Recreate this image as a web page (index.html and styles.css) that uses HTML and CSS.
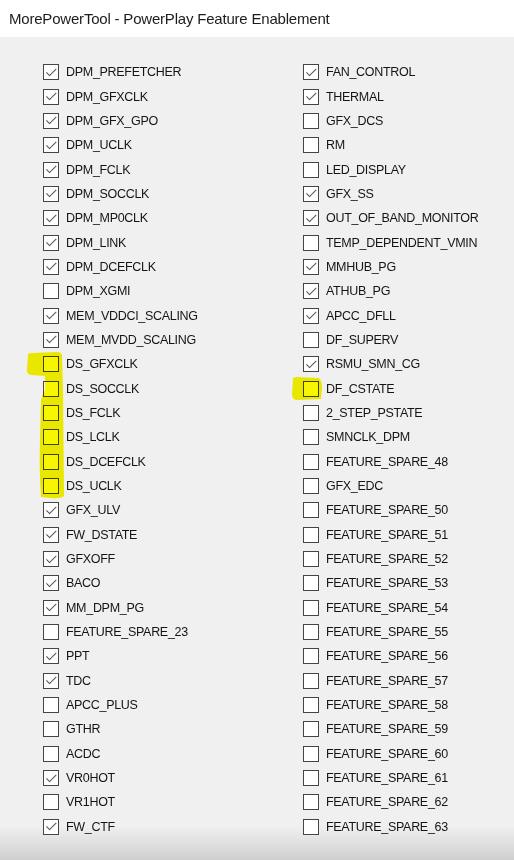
FILE: index.html
```html
<!DOCTYPE html>
<html lang="en">
<head>
    <meta charset="utf-8">
    <title>MorePowerTool - PowerPlay Feature Enablement</title>
    <link rel="stylesheet" href="styles.css">
</head>
<body>
    <div class="titlebar">MorePowerTool - PowerPlay Feature Enablement</div>
    <div class="features">
      <div class="col">
        <label class="item"><span class="box on"></span>DPM_PREFETCHER</label>
        <label class="item"><span class="box on"></span>DPM_GFXCLK</label>
        <label class="item"><span class="box on"></span>DPM_GFX_GPO</label>
        <label class="item"><span class="box on"></span>DPM_UCLK</label>
        <label class="item"><span class="box on"></span>DPM_FCLK</label>
        <label class="item"><span class="box on"></span>DPM_SOCCLK</label>
        <label class="item"><span class="box on"></span>DPM_MP0CLK</label>
        <label class="item"><span class="box on"></span>DPM_LINK</label>
        <label class="item"><span class="box on"></span>DPM_DCEFCLK</label>
        <label class="item"><span class="box"></span>DPM_XGMI</label>
        <label class="item"><span class="box on"></span>MEM_VDDCI_SCALING</label>
        <label class="item"><span class="box on"></span>MEM_MVDD_SCALING</label>
        <label class="item"><span class="box"></span>DS_GFXCLK</label>
        <label class="item"><span class="box"></span>DS_SOCCLK</label>
        <label class="item"><span class="box"></span>DS_FCLK</label>
        <label class="item"><span class="box"></span>DS_LCLK</label>
        <label class="item"><span class="box"></span>DS_DCEFCLK</label>
        <label class="item"><span class="box"></span>DS_UCLK</label>
        <label class="item"><span class="box on"></span>GFX_ULV</label>
        <label class="item"><span class="box on"></span>FW_DSTATE</label>
        <label class="item"><span class="box on"></span>GFXOFF</label>
        <label class="item"><span class="box on"></span>BACO</label>
        <label class="item"><span class="box on"></span>MM_DPM_PG</label>
        <label class="item"><span class="box"></span>FEATURE_SPARE_23</label>
        <label class="item"><span class="box on"></span>PPT</label>
        <label class="item"><span class="box on"></span>TDC</label>
        <label class="item"><span class="box"></span>APCC_PLUS</label>
        <label class="item"><span class="box"></span>GTHR</label>
        <label class="item"><span class="box"></span>ACDC</label>
        <label class="item"><span class="box on"></span>VR0HOT</label>
        <label class="item"><span class="box"></span>VR1HOT</label>
        <label class="item"><span class="box on"></span>FW_CTF</label>
      </div>
      <div class="col">
        <label class="item"><span class="box on"></span>FAN_CONTROL</label>
        <label class="item"><span class="box on"></span>THERMAL</label>
        <label class="item"><span class="box"></span>GFX_DCS</label>
        <label class="item"><span class="box"></span>RM</label>
        <label class="item"><span class="box"></span>LED_DISPLAY</label>
        <label class="item"><span class="box on"></span>GFX_SS</label>
        <label class="item"><span class="box on"></span>OUT_OF_BAND_MONITOR</label>
        <label class="item"><span class="box"></span>TEMP_DEPENDENT_VMIN</label>
        <label class="item"><span class="box on"></span>MMHUB_PG</label>
        <label class="item"><span class="box on"></span>ATHUB_PG</label>
        <label class="item"><span class="box on"></span>APCC_DFLL</label>
        <label class="item"><span class="box"></span>DF_SUPERV</label>
        <label class="item"><span class="box on"></span>RSMU_SMN_CG</label>
        <label class="item"><span class="box"></span>DF_CSTATE</label>
        <label class="item"><span class="box"></span>2_STEP_PSTATE</label>
        <label class="item"><span class="box"></span>SMNCLK_DPM</label>
        <label class="item"><span class="box"></span>FEATURE_SPARE_48</label>
        <label class="item"><span class="box"></span>GFX_EDC</label>
        <label class="item"><span class="box"></span>FEATURE_SPARE_50</label>
        <label class="item"><span class="box"></span>FEATURE_SPARE_51</label>
        <label class="item"><span class="box"></span>FEATURE_SPARE_52</label>
        <label class="item"><span class="box"></span>FEATURE_SPARE_53</label>
        <label class="item"><span class="box"></span>FEATURE_SPARE_54</label>
        <label class="item"><span class="box"></span>FEATURE_SPARE_55</label>
        <label class="item"><span class="box"></span>FEATURE_SPARE_56</label>
        <label class="item"><span class="box"></span>FEATURE_SPARE_57</label>
        <label class="item"><span class="box"></span>FEATURE_SPARE_58</label>
        <label class="item"><span class="box"></span>FEATURE_SPARE_59</label>
        <label class="item"><span class="box"></span>FEATURE_SPARE_60</label>
        <label class="item"><span class="box"></span>FEATURE_SPARE_61</label>
        <label class="item"><span class="box"></span>FEATURE_SPARE_62</label>
        <label class="item"><span class="box"></span>FEATURE_SPARE_63</label>
      </div>
    </div>
    <!-- marker scribbles drawn over the screenshot -->
    <svg class="marker" width="514" height="860" viewBox="0 0 514 860">
      <path d="M28 356 Q27 353 32 353 L58 352 Q63 353 62 358 L63 392 L64 496 Q60 499 50 498 L41 497 Q39 470 40 440 L41 400 Q43 393 45 390 L45 376 L31 375 Q26 374 27 368 Z" />
      <path d="M293 380 Q292 377 297 377 L319 378 Q322 380 322 388 L321 399 L296 400 Q292 399 292 394 Z" />
    </svg>
</body>
</html>
```

FILE: styles.css
```css
html, body {
margin: 0;
padding: 0;
}

body {
width: 514px;
height: 860px;
overflow: hidden;
position: relative;
font-family: "Liberation Sans", Arial, sans-serif;
background: linear-gradient(#f0f0f0 0, #f0f0f0 826px, #cfcfcf 860px);
}

.titlebar {
height: 37px;
display: flex;
align-items: center;
padding-left: 9px;
background-color: #ffffff;
color: #1c1c1c;
font-size: 15px;
letter-spacing: -0.2px;
}

.features {
display: flex;
padding: 23px 0 0 43px;
}

.col {
flex: 0 0 260px;
display: grid;
grid-auto-rows: 24.35px;
}

.col + .col {
flex: 1 1 auto;
min-width: 0;
}

.item {
display: flex;
align-items: center;
gap: 7px;
font-size: 12.5px;
letter-spacing: -0.3px;
color: #141414;
white-space: nowrap;
}

.box {
position: relative;
width: 16px;
height: 16px;
box-sizing: border-box;
border: 1.5px solid #454545;
background-color: #ffffff;
flex-shrink: 0;
}

.box.on::after {
content: "";
position: absolute;
left: 4.5px;
top: 0.5px;
width: 4px;
height: 8.5px;
border-right: 1.5px solid #555555;
border-bottom: 1.5px solid #555555;
transform: rotate(45deg);
}

.marker {
position: absolute;
left: 0;
top: 0;
pointer-events: none;
mix-blend-mode: multiply;
fill: #f8f500;
}
```
